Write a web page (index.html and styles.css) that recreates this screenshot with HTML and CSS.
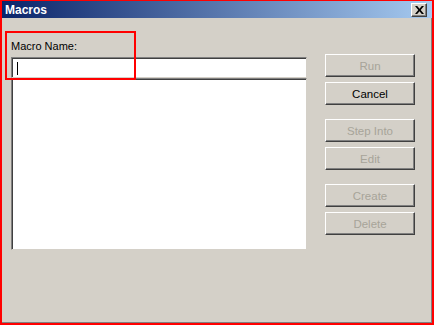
FILE: index.html
```html
<!DOCTYPE html>
<html lang="en">
<head>
    <meta charset="UTF-8">
    <title>Macros</title>
    <link rel="stylesheet" href="styles.css">
</head>
<body>
    <div class="window">
        <div class="titlebar">
            <span class="title">Macros</span>
            <button class="close-btn" type="button">
                <svg width="9" height="8" viewBox="0 0 9 8">
                    <path d="M0 0h2.2l2.3 2.8L6.8 0H9L5.7 4 9 8H6.8L4.5 5.2 2.2 8H0l3.3-4z" fill="#000"/>
                </svg>
            </button>
        </div>
        <div class="content">
            <div class="left">
                <label class="field-label" for="macroName">Macro Name:</label>
                <div class="name-input"><span class="caret"></span></div>
                <div class="macro-list"></div>
            </div>
            <div class="buttons">
                <button class="btn disabled" type="button">Run</button>
                <button class="btn" type="button">Cancel</button>
                <button class="btn disabled spaced" type="button">Step Into</button>
                <button class="btn disabled" type="button">Edit</button>
                <button class="btn disabled spaced" type="button">Create</button>
                <button class="btn disabled" type="button">Delete</button>
            </div>
        </div>
        <div class="highlight"></div>
    </div>
</body>
</html>
```

FILE: styles.css
```css
body {
    margin: 0;
    font-family: 'Liberation Sans', Arial, sans-serif;
    font-size: 11px;
}
.window {
    position: relative;
    width: 434px;
    height: 325px;
    box-sizing: border-box;
    border: 2px solid #ff0000;
    border-top-width: 1px;
    background-color: #d4d0c8;
    box-shadow: inset -1px -1px 0 #808080;
}
.titlebar {
    height: 17px;
    display: flex;
    align-items: center;
    justify-content: space-between;
    padding: 0 5px 0 3px;
    background: linear-gradient(to right, #0a246a, #a6caf0);
}
.title {
    color: #fff;
    font-weight: bold;
    font-size: 12px;
}
.close-btn {
    width: 16px;
    height: 14px;
    padding: 0;
    margin-top: 1px;
    display: flex;
    align-items: center;
    justify-content: center;
    background-color: #d4d0c8;
    border: 1px solid;
    border-color: #fff #404040 #404040 #fff;
    box-shadow: inset -1px -1px 0 #808080;
}
.content {
    display: flex;
    padding-left: 9px;
}
.left {
    width: 296px;
    padding-top: 22px;
}
.field-label {
    display: block;
    height: 13px;
    line-height: 13px;
    margin-bottom: 4px;
    color: #000;
}
.name-input,
.macro-list {
    box-sizing: border-box;
    background-color: #fff;
    border: 1px solid;
    border-color: #808080 #d4d0c8 #d4d0c8 #808080;
    box-shadow: inset 1px 1px 0 #404040, inset -1px -1px 0 #fff;
}
.name-input {
    height: 21px;
    padding: 4px 0 0 5px;
}
.caret {
    display: block;
    width: 1px;
    height: 13px;
    background-color: #000;
}
.macro-list {
    height: 172px;
}
.buttons {
    display: flex;
    flex-direction: column;
    margin-left: 18px;
    padding-top: 36px;
    gap: 5px;
}
.btn {
    width: 90px;
    height: 23px;
    padding: 0;
    font-family: 'Liberation Sans', Arial, sans-serif;
    font-size: 11.5px;
    color: #000;
    background-color: #d4d0c8;
    border: 1px solid;
    border-color: #fff #404040 #404040 #fff;
    box-shadow: inset -1px -1px 0 #808080;
}
.btn.disabled {
    color: #a7a499;
}
.btn.spaced {
    margin-top: 9px;
}
.highlight {
    position: absolute;
    left: 3px;
    top: 30px;
    width: 127px;
    height: 45px;
    border: 2px solid #ff0000;
}
```
